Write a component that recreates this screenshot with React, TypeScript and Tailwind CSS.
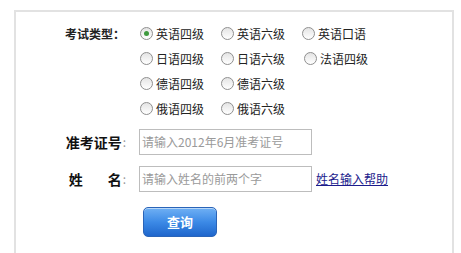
const font = "font-['SimSun','Noto_Sans_CJK_SC',sans-serif]";

function Radio({ label, checked }: { label: string; checked?: boolean }) {
  return (
    <label className="flex items-center gap-[3px] text-[12px] text-[#222] leading-none">
      <span className="flex h-[13px] w-[13px] items-center justify-center rounded-full border border-[#8f8f8f] bg-gradient-to-b from-[#e4e4e4] to-[#ffffff]">
        {checked && <span className="h-[5px] w-[5px] rounded-full bg-[#3f9a3f]" />}
      </span>
      <span>{label}</span>
    </label>
  );
}

export default function App() {
  const rows: { label: string; checked?: boolean }[][] = [
    [{ label: "英语四级", checked: true }, { label: "英语六级" }, { label: "英语口语" }],
    [{ label: "日语四级" }, { label: "日语六级" }, { label: "法语四级" }],
    [{ label: "德语四级" }, { label: "德语六级" }],
    [{ label: "俄语四级" }, { label: "俄语六级" }],
  ];

  return (
    <div className={`h-[253px] w-[461px] overflow-hidden bg-white ${font}`}>
      <div className="ml-[14px] mt-[10px] h-[260px] w-[440px] border-2 border-[#e2e2e2] pt-[9px]">
        <div className="flex">
          <div className="w-[110px] pr-[1px] text-right text-[12px] font-bold leading-[25px] text-[#222]">
            考试类型：
          </div>
          <div className="ml-[14px] flex flex-col">
            {rows.map((row, i) => (
              <div key={i} className="grid h-[25px] grid-cols-[81px_81px_80px] items-center">
                {row.map((r, j) => (
                  <div key={r.label} className={i === 1 && j === 2 ? "pl-[2px]" : ""}>
                    <Radio label={r.label} checked={r.checked} />
                  </div>
                ))}
              </div>
            ))}
          </div>
        </div>

        <div className="mt-[8px] flex items-center">
          <div className="flex w-[110px] items-center justify-end pr-[0px]">
            <span className="text-[14px] font-bold text-[#111]">准考证号</span>
            <span className="ml-[1px] text-[12px] text-[#999]">:</span>
          </div>
          <div className="ml-[13px] flex h-[26px] w-[173px] items-center border border-[#bdbdbd] pl-[2px] text-[12px] text-[#9a9a9a]">
            请输入2012年6月准考证号
          </div>
        </div>

        <div className="mt-[11px] flex items-center">
          <div className="flex w-[110px] items-center justify-end">
            <span className="text-[14px] font-bold text-[#111]">姓</span>
            <span className="ml-[25px] text-[14px] font-bold text-[#111]">名</span>
            <span className="ml-[1px] text-[12px] text-[#999]">:</span>
          </div>
          <div className="ml-[13px] flex h-[26px] w-[173px] items-center border border-[#bdbdbd] pl-[2px] text-[12px] text-[#9a9a9a]">
            请输入姓名的前两个字
          </div>
          <a href="#" className="ml-[4px] text-[12px] text-[#1b1b8c] underline">
            姓名输入帮助
          </a>
        </div>

        <div className="ml-[127px] mt-[15px]">
          <button className="flex h-[30px] w-[74px] items-center justify-center rounded-[5px] border border-[#2a64b8] bg-gradient-to-b from-[#6fb0f4] via-[#3c8ae6] to-[#1f66cc] text-[13px] font-bold text-white shadow-[inset_0_1px_0_rgba(255,255,255,0.5)]">
            查询
          </button>
        </div>
      </div>
    </div>
  );
}
